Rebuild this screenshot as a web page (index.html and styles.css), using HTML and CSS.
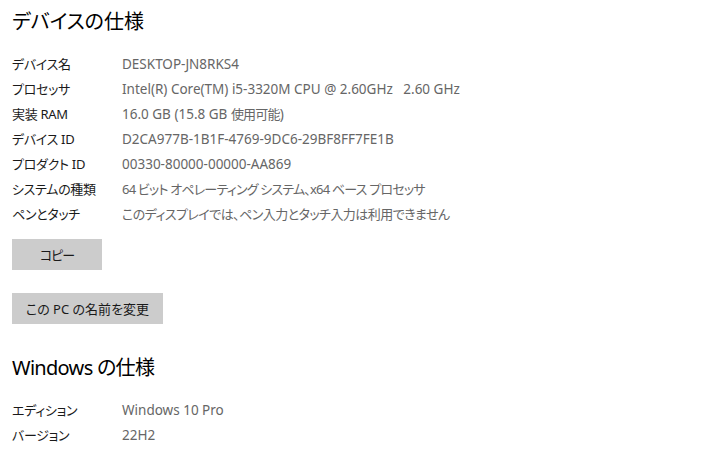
FILE: index.html
```html
<!DOCTYPE html>
<html lang="ja">
<head>
<meta charset="utf-8">
<link rel="stylesheet" href="styles.css">
</head>
<body>
<main class="page">
  <h1 class="title">デバイスの仕様</h1>
  <dl class="specs">
    <div class="row"><dt>デバイス名</dt><dd>DESKTOP-JN8RKS4</dd></div>
    <div class="row"><dt>プロセッサ</dt><dd>Intel(R) Core(TM) i5-3320M CPU @ 2.60GHz&nbsp;&nbsp;&nbsp;2.60 GHz</dd></div>
    <div class="row"><dt>実装 RAM</dt><dd>16.0 GB (15.8 GB <span class="ja">使用可能</span>)</dd></div>
    <div class="row"><dt>デバイス ID</dt><dd>D2CA977B-1B1F-4769-9DC6-29BF8FF7FE1B</dd></div>
    <div class="row"><dt>プロダクト ID</dt><dd>00330-80000-00000-AA869</dd></div>
    <div class="row"><dt>システムの種類</dt><dd class="ja">64 ビット オペレーティング システム、x64 ベース プロセッサ</dd></div>
    <div class="row"><dt>ペンとタッチ</dt><dd class="ja ja-loose">このディスプレイでは、ペン入力とタッチ入力は利用できません</dd></div>
  </dl>
  <button class="btn btn-copy">コピー</button>
  <button class="btn btn-rename">この PC の名前を変更</button>
  <h1 class="title title-win">Windows の仕様</h1>
  <dl class="specs">
    <div class="row"><dt>エディション</dt><dd>Windows 10 Pro</dd></div>
    <div class="row"><dt>バージョン</dt><dd>22H2</dd></div>
  </dl>
</main>
</body>
</html>
```
FILE: styles.css
```css
html, body {
  margin: 0;
  padding: 0;
  background: #ffffff;
}
body {
  font-family: "Noto Sans", "Noto Sans CJK JP", sans-serif;
  font-feature-settings: "palt" 1;
  color: #1a1a1a;
}
.page {
  display: flex;
  flex-direction: column;
  align-items: flex-start;
  padding: 8px 0 0 12px;
}
.title {
  margin: 0;
  font-size: 20px;
  font-weight: 400;
  line-height: 28px;
  color: #000;
}
.title-win {
  margin-top: 30px;
  letter-spacing: -0.7px;
}
.specs {
  margin: 15px 0 0 0;
  display: flex;
  flex-direction: column;
}
.row {
  display: flex;
  height: 25px;
  align-items: center;
  font-size: 13.5px;
}
.row dt {
  width: 110px;
  font-size: 13px;
  letter-spacing: -0.3px;
  color: #1a1a1a;
}
.row dd {
  margin: 0;
  color: #666666;
}
.row .ja {
  font-size: 13px;
  letter-spacing: -0.8px;
}
.row .ja-loose {
  letter-spacing: -0.55px;
}
.btn {
  font-family: inherit;
  font-feature-settings: "palt" 1;
  font-size: 13px;
  color: #1a1a1a;
  background: #cccccc;
  border: none;
  height: 31px;
  padding: 0;
}
.btn-copy {
  width: 90px;
  margin-top: 13px;
  letter-spacing: -1px;
}
.btn-rename {
  width: 151px;
  margin-top: 23px;
}
```
